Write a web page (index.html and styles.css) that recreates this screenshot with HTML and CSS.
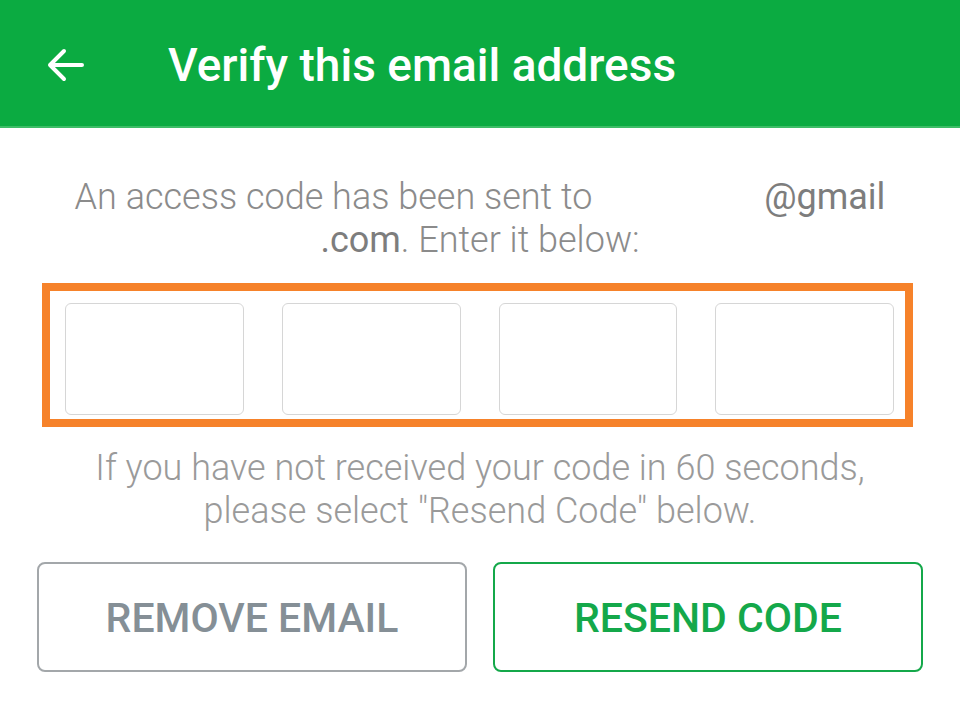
FILE: index.html
```html
<!DOCTYPE html>
<html>
<head>
<meta charset="utf-8">
<link rel="stylesheet" href="styles.css">
</head>
<body>
<header class="appbar">
  <svg class="back" width="40" height="40" viewBox="0 0 40 40" aria-hidden="true">
    <path d="M37 20H5M19 6L5 20l14 14" fill="none" stroke="#fff" stroke-width="4" stroke-linecap="round" stroke-linejoin="round"/>
  </svg>
  <h1 class="title">Verify this email address</h1>
</header>
<main class="content">
  <p class="intro">An access code has been sent to <span class="email"><span class="redact"></span>@gmail</span><br><span class="email">.com</span>. Enter it below:</p>
  <div class="code-box">
    <div class="cell"></div>
    <div class="cell"></div>
    <div class="cell"></div>
    <div class="cell"></div>
  </div>
  <p class="hint">If you have not received your code in 60 seconds,<br>please select "Resend Code" below.</p>
  <div class="actions">
    <button class="btn btn-remove">REMOVE EMAIL</button>
    <button class="btn btn-resend">RESEND CODE</button>
  </div>
</main>
</body>
</html>
```
FILE: styles.css
```css
html, body {
  margin: 0;
  padding: 0;
  background: #fff;
  font-family: Roboto, "Liberation Sans", sans-serif;
}
.appbar {
  height: 126px;
  background: #0bab41;
  border-bottom: 2px solid #3dbd66;
  display: flex;
  align-items: center;
  padding-left: 45px;
}
.back {
  flex: none;
  margin-top: 4px;
}
.title {
  margin: 4px 0 0 83px;
  color: #fff;
  font-size: 46px;
  font-weight: 500;
  line-height: 54px;
}
.content {
  padding: 0 37px;
}
.intro {
  margin: 48px 0 0;
  text-align: center;
  font-size: 36px;
  font-weight: 300;
  line-height: 43px;
  color: #8b8b8b;
}
.email {
  font-weight: 400;
  color: #7d7d7d;
}
.redact {
  display: inline-block;
  width: 163px;
}
.code-box {
  margin: 21px 0 0 5px;
  border: 8px solid #f6822a;
  display: flex;
  gap: 38px;
  padding: 12px 11px 4px 15px;
  box-sizing: border-box;
  width: 871px;
  height: 144px;
}
.cell {
  width: 179px;
  height: 112px;
  border: 1px solid #d6d6d6;
  border-radius: 6px;
  box-sizing: border-box;
}
.hint {
  margin: 20px 0 0;
  text-align: center;
  font-size: 36px;
  font-weight: 300;
  line-height: 43px;
  color: #9a9a9a;
}
.actions {
  display: flex;
  gap: 26px;
  margin-top: 29px;
}
.btn {
  width: 430px;
  height: 110px;
  background: #fff;
  border-radius: 8px;
  font-family: Roboto, "Liberation Sans", sans-serif;
  font-size: 41px;
  font-weight: 500;
  padding: 2px 0 0;
}
.btn-remove {
  border: 2px solid #a3a7aa;
  color: #858f96;
}
.btn-resend {
  border: 2.5px solid #14a84a;
  color: #14a84a;
}
```
